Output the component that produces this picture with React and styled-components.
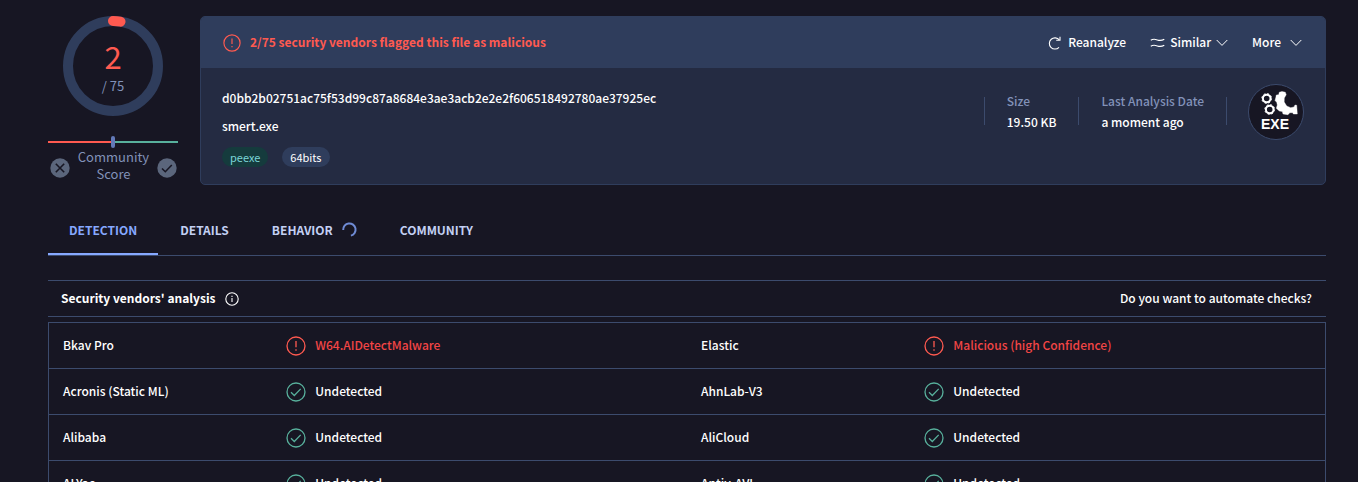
import React from "react";
import styled, { createGlobalStyle, css } from "styled-components";

const color = {
  page: "#171623",
  card: "#242b42",
  head: "#2f3d5c",
  line: "#3c4b6d",
  red: "#ff5a50",
  redText: "#f24545",
  green: "#58b09c",
  muted: "#8292b9",
  accent: "#86a8ff",
  text: "#ffffff",
};

const GlobalStyle = createGlobalStyle`
  * { box-sizing: border-box; }
  html { scrollbar-width: none; }
  body {
    margin: 0;
    background: ${color.page};
    color: ${color.text};
    font-family: "Noto Sans CJK SC", "Noto Sans", sans-serif;
    font-size: 12px;
    font-weight: 500;
    line-height: 20px;
  }
  button, a { font: inherit; color: inherit; text-decoration: none; }
  button { background: none; border: 0; padding: 0; margin: 0; cursor: pointer; }
  svg { display: block; flex: none; }
`;

const Page = styled.main`
  padding: 16px 32px 0 48px;
`;

/* Optical centring of text against the icons beside it */
const Label = styled.span`
  display: block;
  padding-bottom: 2px;
`;

const Summary = styled.section`
  display: flex;
  gap: 22px;
`;

const Score = styled.aside`
  width: 130px;
  flex: none;
  display: flex;
  flex-direction: column;
`;

const RingBox = styled.div`
  display: grid;
  place-items: center;
  > * { grid-area: 1 / 1; }
`;

const RingLabel = styled.div`
  display: flex;
  flex-direction: column;
  align-items: center;
  gap: 2px;
  padding-top: 1px;
  color: ${color.muted};
  font-size: 13px;
  font-weight: 400;
  strong {
    color: ${color.red};
    font-size: 31px;
    font-weight: 400;
    line-height: 36px;
  }
`;

const Balance = styled.div`
  display: flex;
  align-items: center;
  height: 12px;
  margin-top: 20px;
`;

const BalanceLine = styled.span`
  flex: 1;
  height: 2px;
  background: ${(p) => (p.$good ? color.green : color.red)};
`;

const BalanceMark = styled.span`
  width: 4px;
  height: 12px;
  border-radius: 2px;
  background: #6279b8;
`;

const Community = styled.div`
  display: flex;
  justify-content: space-between;
  align-items: flex-end;
  padding: 0 1px 0 2px;
`;

const CommunityText = styled.p`
  margin: 0;
  text-align: center;
  color: ${color.muted};
  font-size: 13px;
  font-weight: 400;
  line-height: 17px;
`;

const VoteButton = styled.button`
  padding-bottom: 4px;
`;

const Card = styled.article`
  flex: 1;
  min-width: 0;
  border: 1px solid ${color.head};
  border-radius: 5px;
  background: ${color.card};
  overflow: hidden;
`;

const CardHead = styled.header`
  display: flex;
  align-items: center;
  justify-content: space-between;
  height: 51px;
  padding: 0 23px 0 22px;
  background: ${color.head};
`;

const Verdict = styled.div`
  display: flex;
  align-items: center;
  gap: 9px;
  color: ${color.red};
  font-weight: 700;
`;

const Actions = styled.div`
  display: flex;
  gap: 24px;
`;

const Action = styled.button`
  display: flex;
  align-items: center;
  gap: ${(p) => p.$gap}px;
`;

const CardBody = styled.div`
  display: flex;
  justify-content: space-between;
  padding: 16px 21px 17px;
`;

const FileInfo = styled.div`
  display: flex;
  flex-direction: column;
  gap: 8px;
  padding-top: 4px;
`;

const Tags = styled.div`
  display: flex;
  gap: 14px;
  padding-top: 3px;
`;

const Tag = styled.a`
  padding: 0 8px;
  border-radius: 10px;
  font-size: 11px;
  font-weight: 400;
  line-height: 20px;
  background: ${(p) => (p.$green ? "#153b3d" : color.head)};
  color: ${(p) => (p.$green ? "#7bd6d8" : color.text)};
`;

const Meta = styled.div`
  display: flex;
  align-items: flex-start;
`;

const MetaItem = styled.dl`
  display: flex;
  flex-direction: column;
  justify-content: center;
  gap: 1px;
  height: 28px;
  margin: 13px 0 0;
  padding: 0 22px;
  border-left: 1px solid ${color.line};
  ${(p) => p.$last && css`
    margin-right: 21px;
    border-right: 1px solid ${color.line};
  `}
  dt { color: ${color.muted}; }
  dd { margin: 0; }
`;

const Tabs = styled.nav`
  display: flex;
  gap: 1px;
  height: 50px;
  margin-top: 21px;
  border-bottom: 1px solid ${color.line};
`;

const Tab = styled.button`
  display: flex;
  align-items: center;
  gap: 9px;
  padding: 0 21px 2px;
  font-weight: 700;
  color: ${(p) => (p.$active ? color.accent : "#c3d0f3")};
  border-top: 2px solid transparent;
  border-bottom: 2px solid ${(p) => (p.$active ? color.accent : "transparent")};
`;

const SectionHead = styled.header`
  display: flex;
  align-items: center;
  justify-content: space-between;
  height: 37px;
  margin: 24px 0 5px;
  padding: 0 14px 0 13px;
  border: solid ${color.line};
  border-width: 1px 0;
`;

const SectionTitle = styled.h2`
  display: flex;
  align-items: center;
  gap: 10px;
  margin: 0;
  font-size: 12px;
  font-weight: 700;
`;

const VendorTable = styled.table`
  width: 100%;
  table-layout: fixed;
  border-spacing: 0;
  border: 1px solid ${color.line};
  border-top: 0;
`;

const NameCol = styled.col`
  width: 17.5%;
`;

const Cell = styled.td`
  height: 46px;
  padding: 0 14px;
  border-top: 1px solid ${color.line};
`;

const Result = styled.span`
  display: flex;
  align-items: center;
  gap: 9px;
  color: ${(p) => (p.$bad ? color.redText : color.text)};
`;

const AlertIcon = ({ size = 20 }) => (
  <svg width={size} height={size} viewBox="0 0 20 20" fill="none" stroke={color.red} strokeWidth="1.3">
    <circle cx="10" cy="10" r="9" />
    <path d="M10 5v6.2M10 13.2v1.6" />
  </svg>
);

const OkIcon = () => (
  <svg width="20" height="20" viewBox="0 0 20 20" fill="none" stroke={color.green} strokeWidth="1.3">
    <circle cx="10" cy="10" r="9" />
    <path d="M5 10.3l3.3 3.2 6.4-6.6" />
  </svg>
);

const InfoIcon = () => (
  <svg width="14" height="14" viewBox="0 0 14 14" fill="none" stroke="#fff" strokeWidth="1.1">
    <circle cx="7" cy="7" r="6.2" />
    <path d="M7 6v4M7 3.8v1.2" />
  </svg>
);

const VoteIcon = ({ d }) => (
  <svg width="20" height="20" viewBox="0 0 20 20" fill="none">
    <circle cx="10" cy="10" r="9.7" fill="#5b667c" />
    <path d={d} stroke={color.page} strokeWidth="1.6" />
  </svg>
);

const Chevron = () => (
  <svg width="12" height="8" viewBox="0 0 12 8" fill="none" stroke="#fff" strokeWidth="1">
    <path d="M.7 1l5.3 5.400L11.3 1" />
  </svg>
);

const ReloadIcon = () => (
  <svg width="13" height="14" viewBox="0 0 13 14" fill="none" stroke="#fff" strokeWidth="1.1">
    <path d="M11.300 3.900A5.600 5.600 0 1 0 11 11.300" />
    <path d="M12 .8v3.500H8.200" />
  </svg>
);

const SimilarIcon = () => (
  <svg width="15" height="10" viewBox="0 0 15 10" fill="none" stroke="#fff" strokeWidth="1.1">
    <path d="M.8 2.200C3 .8 4.800 1 7.300 1.900S11.500 2.800 14.300 1.300" />
    <path d="M.8 8.200C3 6.800 4.800 7 7.300 7.900S11.500 8.800 14.300 7.300" />
  </svg>
);

const Spinner = () => (
  <svg width="15" height="15" viewBox="0 0 15 15" fill="none">
    <path d="M1.2 8A6.2 6.2 0 1 1 8.9 13.6" stroke="#6f8bd4" strokeWidth="2" />
  </svg>
);

const Ring = () => (
  <svg width="100" height="100" viewBox="0 0 100 100" fill="none" strokeWidth="10">
    <circle cx="50" cy="50" r="45" stroke={color.head} />
    <path d="M50 5A45 45 0 0 1 57.5 5.63" stroke={color.red} strokeLinecap="round" />
  </svg>
);

const ExeIcon = () => (
  <svg width="56" height="56" viewBox="0 0 56 56">
    <circle cx="28" cy="28" r="27.5" fill={color.page} stroke={color.line} />
    <g fill="none" stroke="#fff">
      <circle cx="18.7" cy="14.5" r="3.8" strokeWidth="2" />
      <circle cx="18.7" cy="14.5" r="4.9" strokeWidth="1" strokeDasharray="1.92 1.92" />
      <circle cx="21.7" cy="25.5" r="3.8" strokeWidth="2" />
      <circle cx="21.7" cy="25.5" r="4.9" strokeWidth="1" strokeDasharray="1.92 1.92" />
    </g>
    <path
      fill="#fff"
      stroke="#fff"
      strokeWidth=".4"
      strokeLinejoin="round"
      d="M31.3 8.2L34 7.6L37.3 8.2L38.2 10.7L36.3 14L36.2 18L38.7 22L42.7 23.7L46 23L47 21L48.7 21.3L49.3 30L45.3 30L44.7 28.7L41.8 28.7L40 30.7L35 30L34.3 27.5L31.3 27L28.3 24.3L29.3 21L28.7 18.3L27 16.5L27.8 13.5L28.3 11L30.7 10.7Z"
    />
    <text x="27" y="45" textAnchor="middle" fill="#fff" fontFamily="Liberation Sans, sans-serif" fontWeight="700" fontSize="14">
      EXE
    </text>
  </svg>
);

const OK = "Undetected";
const rows = [
  [["Bkav Pro", "W64.AIDetectMalware", true], ["Elastic", "Malicious (high Confidence)", true]],
  [["Acronis (Static ML)", OK], ["AhnLab-V3", OK]],
  [["Alibaba", OK], ["AliCloud", OK]],
  [["ALYac", OK], ["Antiy-AVL", OK]],
];

const Vendor = ({ name, result, bad }) => (
  <>
    <Cell>
      <Label>{name}</Label>
    </Cell>
    <Cell>
      <Result $bad={bad}>
        {bad ? <AlertIcon /> : <OkIcon />}
        <Label>{result}</Label>
      </Result>
    </Cell>
  </>
);

export default function App() {
  return (
    <Page>
      <GlobalStyle />
      <Summary>
        <Score>
          <RingBox>
            <Ring />
            <RingLabel>
              <strong>2</strong>
              <span>/ 75</span>
            </RingLabel>
          </RingBox>
          <Balance>
            <BalanceLine />
            <BalanceMark />
            <BalanceLine $good />
          </Balance>
          <Community>
            <VoteButton aria-label="Vote malicious">
              <VoteIcon d="M5.8 5.8l8.4 8.4M14.2 5.8l-8.4 8.4" />
            </VoteButton>
            <CommunityText>
              Community
              <br />
              Score
            </CommunityText>
            <VoteButton aria-label="Vote harmless">
              <VoteIcon d="M5 10.5l3.3 3.2 6.5-6.7" />
            </VoteButton>
          </Community>
        </Score>

        <Card>
          <CardHead>
            <Verdict>
              <AlertIcon size={18} />
              <Label>2/75 security vendors flagged this file as malicious</Label>
            </Verdict>
            <Actions>
              <Action $gap={7}>
                <ReloadIcon />
                <Label>Reanalyze</Label>
              </Action>
              <Action $gap={5}>
                <SimilarIcon />
                <Label>Similar</Label>
                <Chevron />
              </Action>
              <Action $gap={9}>
                <Label>More</Label>
                <Chevron />
              </Action>
            </Actions>
          </CardHead>
          <CardBody>
            <FileInfo>
              <span>d0bb2b02751ac75f53d99c87a8684e3ae3acb2e2e2f606518492780ae37925ec</span>
              <span>smert.exe</span>
              <Tags>
                <Tag href="#peexe" $green>peexe</Tag>
                <Tag href="#64bits">64bits</Tag>
              </Tags>
            </FileInfo>
            <Meta>
              <MetaItem>
                <dt>Size</dt>
                <dd>19.50 KB</dd>
              </MetaItem>
              <MetaItem $last>
                <dt>Last Analysis Date</dt>
                <dd>a moment ago</dd>
              </MetaItem>
              <ExeIcon />
            </Meta>
          </CardBody>
        </Card>
      </Summary>

      <Tabs>
        <Tab $active>DETECTION</Tab>
        <Tab>DETAILS</Tab>
        <Tab>
          BEHAVIOR
          <Spinner />
        </Tab>
        <Tab>COMMUNITY</Tab>
      </Tabs>

      <SectionHead>
        <SectionTitle>
          <Label>Security vendors' analysis</Label>
          <InfoIcon />
        </SectionTitle>
        <a href="#automate">
          <Label>Do you want to automate checks?</Label>
        </a>
      </SectionHead>

      <VendorTable>
        <colgroup>
          <NameCol />
          <col />
          <NameCol />
          <col />
        </colgroup>
        <tbody>
          {rows.map(([a, b]) => (
            <tr key={a[0]}>
              <Vendor name={a[0]} result={a[1]} bad={a[2]} />
              <Vendor name={b[0]} result={b[1]} bad={b[2]} />
            </tr>
          ))}
        </tbody>
      </VendorTable>
    </Page>
  );
}
